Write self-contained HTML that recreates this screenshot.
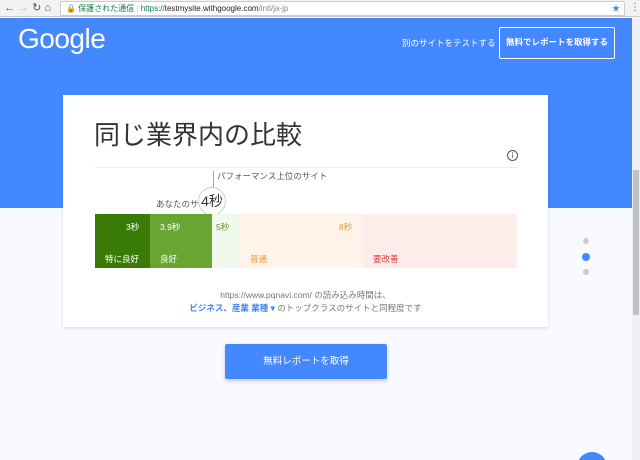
<!DOCTYPE html>
<html><head><meta charset="utf-8"><style>
*{margin:0;padding:0;box-sizing:border-box}
html,body{width:640px;height:460px;overflow:hidden}
body{position:relative;background:#f8faff;font-family:"Liberation Sans","Noto Sans CJK JP",sans-serif}
.a{position:absolute;white-space:nowrap}
</style></head><body>
<div class="a" style="left:0;top:0;width:640px;height:17px;background:#f2f2f2;border-bottom:1px solid #ccc"></div>
<div class="a" style="left:4px;top:1px;font-size:11px;color:#555">← <span style="color:#bbb">→</span> ↻ ⌂</div>
<div class="a" style="left:60px;top:1px;width:565px;height:15px;background:#fff;border:1px solid #ccc;border-radius:2px;font-size:8px;line-height:13px;padding-left:5px;color:#0b8043">🔒 保護された通信 <span style="color:#ccc">|</span> <span style="color:#0b8043">https://</span><span style="color:#222">testmysite.withgoogle.com</span><span style="color:#888">/intl/ja-jp</span><span class="a" style="right:4px;color:#4285f4">★</span></div>
<div class="a" style="left:630px;top:2px;font-size:10px;color:#555">⋮</div>
<div class="a" style="left:0;top:18px;width:632px;height:190px;background:#4488ff"></div>
<div class="a" style="left:18px;top:23px;font-size:28px;color:#fff;letter-spacing:-0.5px">Google</div>
<div class="a" style="left:402px;top:37px;font-size:8.5px;color:#fff">別のサイトをテストする</div>
<div class="a" style="left:499px;top:27px;width:116px;height:32px;border:1.5px solid #fff;border-radius:2px;color:#fff;font-size:8.5px;font-weight:bold;text-align:center;line-height:29px">無料でレポートを取得する</div>
<div class="a" style="left:632px;top:18px;width:8px;height:442px;background:#f0f0f0"></div>
<div class="a" style="left:633px;top:170px;width:6px;height:145px;background:#c1c1c1"></div>
<div class="a" style="left:63px;top:95px;width:485px;height:232px;background:#fff;box-shadow:0 1px 3px rgba(0,0,0,.15)"></div>
<div class="a" style="left:94px;top:115px;font-size:26px;color:#333">同じ業界内の比較</div>
<div class="a" style="left:507px;top:150px;width:11px;height:11px;border:1.2px solid #555;border-radius:50%;font-size:8px;line-height:9px;text-align:center;color:#555">i</div>
<div class="a" style="left:95px;top:167px;width:422px;height:1px;background:#eee"></div>
<div class="a" style="left:213px;top:171px;width:1px;height:28px;background:#8bc34a"></div>
<div class="a" style="left:217px;top:170px;font-size:8.5px;color:#555">パフォーマンス上位のサイト</div>
<div class="a" style="left:156px;top:198px;font-size:8.5px;color:#555">あなたのサイト</div>
<div class="a" style="left:198px;top:187px;width:28px;height:28px;background:#fff;border:1px solid #ccc;border-radius:50% 50% 50% 0;transform:rotate(-45deg)"></div>
<div class="a" style="left:198px;top:191px;width:28px;text-align:center;font-size:14px;color:#333">4秒</div>
<div class="a" style="left:95px;top:214px;width:55px;height:54px;background:#3a7a06"></div>
<div class="a" style="left:150px;top:214px;width:62px;height:54px;background:#68a532"></div>
<div class="a" style="left:212px;top:214px;width:28px;height:54px;background:#f1f8ec"></div>
<div class="a" style="left:240px;top:214px;width:123px;height:54px;background:#fff3ea"></div>
<div class="a" style="left:363px;top:214px;width:154px;height:54px;background:#fdecea"></div>
<div class="a" style="left:126px;top:221px;font-size:8.5px;color:#fff">3秒</div>
<div class="a" style="left:160px;top:221px;font-size:8.5px;color:#fff">3.9秒</div>
<div class="a" style="left:216px;top:221px;font-size:8.5px;color:#5a9a2a">5秒</div>
<div class="a" style="left:339px;top:221px;font-size:8.5px;color:#f29a2e">8秒</div>
<div class="a" style="left:105px;top:253px;font-size:8.5px;color:#fff">特に良好</div>
<div class="a" style="left:160px;top:253px;font-size:8.5px;color:#fff">良好</div>
<div class="a" style="left:250px;top:253px;font-size:8.5px;color:#f29a2e">普通</div>
<div class="a" style="left:373px;top:253px;font-size:8.5px;color:#e53935">要改善</div>
<div class="a" style="left:63px;top:289px;width:485px;text-align:center;font-size:8.5px;color:#777">https://www.pqnavi.com/ の読み込み時間は、</div>
<div class="a" style="left:63px;top:302px;width:485px;text-align:center;font-size:8.5px;color:#777"><span style="color:#4285f4;font-weight:bold">ビジネス、産業 業種 ▾</span> のトップクラスのサイトと同程度です</div>
<div class="a" style="left:583px;top:238px;width:6px;height:6px;border-radius:50%;background:#ccc"></div>
<div class="a" style="left:582px;top:253px;width:8px;height:8px;border-radius:50%;background:#4488ff"></div>
<div class="a" style="left:583px;top:269px;width:6px;height:6px;border-radius:50%;background:#ccc"></div>
<div class="a" style="left:225px;top:344px;width:162px;height:35px;background:#4488ff;border-radius:2px;box-shadow:0 2px 4px rgba(0,0,0,.2);color:#fff;font-size:9.5px;text-align:center;line-height:35px">無料レポートを取得</div>
<div class="a" style="left:577px;top:452px;width:30px;height:30px;border-radius:50%;background:#4488ff"></div>
</body></html>
